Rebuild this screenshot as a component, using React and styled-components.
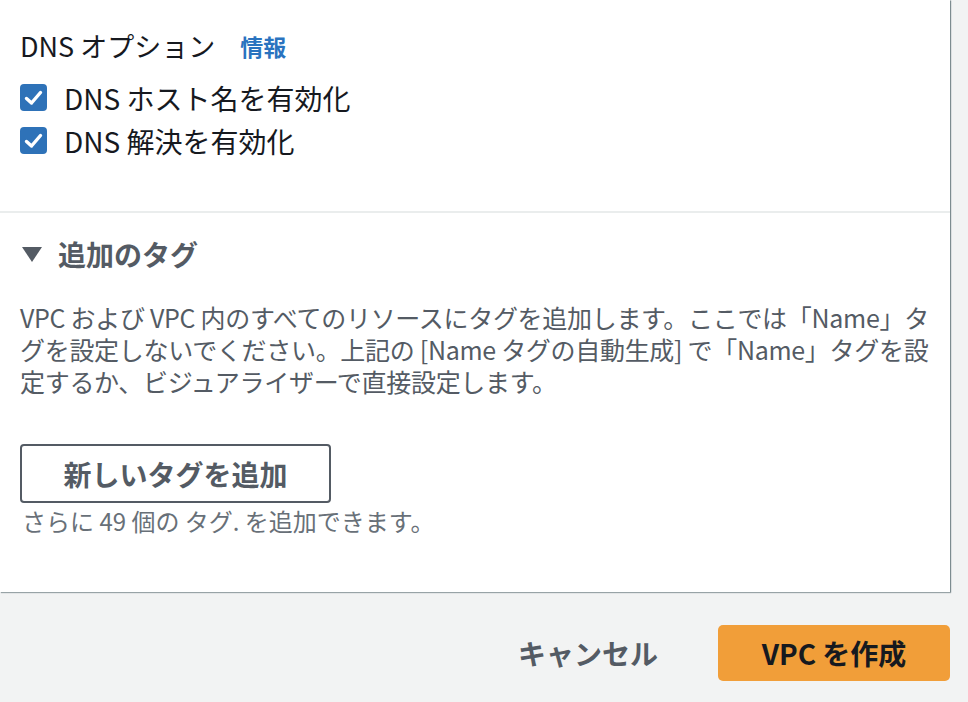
import styled, { createGlobalStyle } from "styled-components";

let GlobalStyle = createGlobalStyle`
    html, body {
        margin: 0;
        padding: 0;
        background: #f2f3f3;
        font-family: "Noto Sans CJK JP", "Noto Sans", sans-serif;
        color: #16191f;
    }
`;

let Page = styled.div`
    width: 968px;
    height: 702px;
    padding-right: 18px;
    box-sizing: border-box;
    overflow: hidden;
`;

let Panel = styled.div`
    width: 950px;
    background: #ffffff;
    box-shadow: 1px 1px 1px 0 rgba(0, 28, 36, 0.35), 1px 0 1px 0 rgba(0, 28, 36, 0.2);
`;

let Section = styled.div`
    padding: ${(p) => p.$pad};
    border-top: ${(p) => (p.$divided ? "2px solid #eaeded" : "none")};
`;

let TitleRow = styled.div`
    display: flex;
    align-items: center;
    gap: 25px;
    height: 32px;
`;

let Title = styled.span`
    font-size: 27px;
    line-height: 32px;
    color: #16191f;
`;

let InfoLink = styled.a`
    font-size: 23px;
    font-weight: 700;
    color: #2a73bf;
    text-decoration: none;
`;

let CheckList = styled.div`
    display: flex;
    flex-direction: column;
    margin-top: 14px;
`;

let CheckRow = styled.label`
    display: flex;
    align-items: center;
    gap: 17px;
    height: 43px;
    font-size: 28px;
    color: #16191f;
`;

let Box = styled.span`
    width: 27px;
    height: 27px;
    border-radius: 4px;
    background: #2e72b8;
    display: flex;
    align-items: center;
    justify-content: center;
    flex-shrink: 0;
`;

let ExpandHeader = styled.div`
    display: flex;
    align-items: center;
    gap: 16px;
    height: 36px;
    padding-left: 2px;
    font-size: 28px;
    font-weight: 700;
    color: #545b64;
`;

let Caret = styled.span`
    width: 0;
    height: 0;
    border-left: 10px solid transparent;
    border-right: 10px solid transparent;
    border-top: 15px solid #545b64;
`;

let Description = styled.p`
    margin: 29px 0 0;
    font-size: 25px;
    line-height: 32px;
    color: #545b64;
    letter-spacing: -0.3px;
`;

let OutlineButton = styled.button`
    margin-top: 47px;
    width: 311px;
    height: 59px;
    border: 2px solid #545b64;
    border-radius: 4px;
    background: #ffffff;
    font-family: inherit;
    font-size: 28px;
    font-weight: 700;
    color: #545b64;
    display: block;
`;

let Hint = styled.div`
    margin-top: 3px;
    font-size: 24px;
    line-height: 30px;
    color: #687078;
    padding-left: 2px;
`;

let Footer = styled.div`
    display: flex;
    justify-content: flex-end;
    align-items: center;
    gap: 30px;
    margin-top: 33px;
`;

let TextButton = styled.button`
    border: 0;
    background: transparent;
    padding: 0 30px;
    height: 56px;
    font-family: inherit;
    font-size: 28px;
    font-weight: 700;
    color: #545b64;
`;

let PrimaryButton = styled.button`
    width: 232px;
    height: 56px;
    border: 0;
    border-radius: 5px;
    background: #f19e39;
    font-family: inherit;
    font-size: 28px;
    font-weight: 700;
    color: #16191f;
`;

function Check() {
    return (
        <Box>
            <svg width="19" height="16" viewBox="0 0 19 16">
                <path d="M2.5 8.5 L7.5 13 L16.5 2.5" fill="none" stroke="#ffffff" strokeWidth="3.4" strokeLinecap="round" strokeLinejoin="round" />
            </svg>
        </Box>
    );
}

function App() {
    return (
        <Page>
            <GlobalStyle />
            <Panel>
                <Section $pad="30px 20px 49px">
                    <TitleRow>
                        <Title>DNS オプション</Title>
                        <InfoLink href="#">情報</InfoLink>
                    </TitleRow>
                    <CheckList>
                        <CheckRow><Check />DNS ホスト名を有効化</CheckRow>
                        <CheckRow><Check />DNS 解決を有効化</CheckRow>
                    </CheckList>
                </Section>
                <Section $divided $pad="23px 20px 56px">
                    <ExpandHeader><Caret />追加のタグ</ExpandHeader>
                    <Description>
                        VPC および VPC 内のすべてのリソースにタグを追加します。ここでは「Name」タ<br />
                        グを設定しないでください。上記の [Name タグの自動生成] で「Name」タグを設<br />
                        定するか、ビジュアライザーで直接設定します。
                    </Description>
                    <OutlineButton>新しいタグを追加</OutlineButton>
                    <Hint>さらに 49 個の タグ. を追加できます。</Hint>
                </Section>
            </Panel>
            <Footer>
                <TextButton>キャンセル</TextButton>
                <PrimaryButton>VPC を作成</PrimaryButton>
            </Footer>
        </Page>
    );
}

export default App;
